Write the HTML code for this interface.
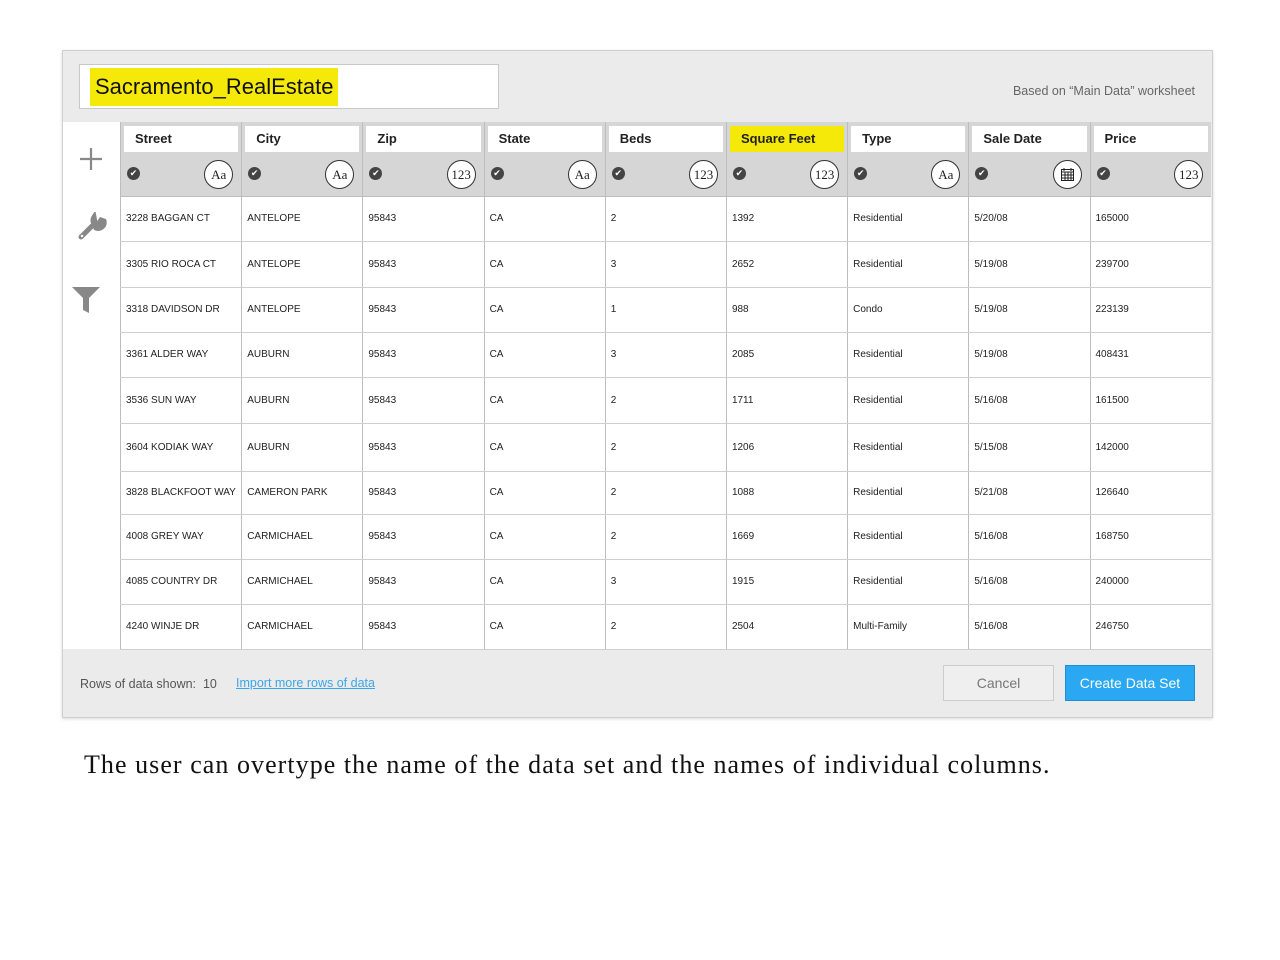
<!DOCTYPE html><html><head><meta charset="utf-8"><style>
body{margin:0;width:1280px;height:960px;background:#fff;font-family:"Liberation Sans",sans-serif;position:relative;overflow:hidden}
.dlg{position:absolute;left:62px;top:50px;width:1149px;height:666px;background:#ebebeb;border:1px solid #cfcfcf;box-shadow:0 1px 3px rgba(0,0,0,.15)}
.a{position:absolute}
.name{left:16px;top:13px;width:418px;height:43px;background:#fff;border:1px solid #c8c8c8}
.name span{position:absolute;left:10px;top:3px;height:38px;padding:0 5px;background:#f5e90a;font-size:22px;line-height:38px;color:#111}
.side{left:0;top:71px;width:58px;height:527px;background:#fff}
table{position:absolute;left:57px;top:71px;border-collapse:collapse;table-layout:fixed;width:1091px}
td{box-sizing:border-box;width:121.2px;border-left:1px solid #bdbdbd;border-bottom:1px solid #cfcfcf;font-size:10px;color:#222;padding:0 0 0 5px;background:#fff;white-space:nowrap;overflow:hidden}
tr.h td{background:#d6d6d6;height:31px;padding:3px 3px 0 3px;border-bottom:none}
tr.h td div{background:#fff;height:26px;line-height:26px;font-weight:bold;font-size:13px;padding-left:11px;color:#222}
tr.t td{background:#d6d6d6;height:43px;position:relative;border-bottom:1px solid #bdbdbd}
.chk{position:absolute;left:6px;top:14px;width:13px;height:13px;border-radius:50%;background:#444;color:#fff;font-size:9px;line-height:13px;text-align:center}
.ic{position:absolute;right:8px;top:7px;width:27px;height:27px;border:1px solid #333;border-radius:50%;background:#fff;font-family:"Liberation Serif",serif;font-size:13px;line-height:27px;text-align:center;color:#222}
</style></head><body>
<div class="dlg">
<div class="a name"><span>Sacramento_RealEstate</span></div>
<div class="a" style="right:17px;top:33px;font-size:12.5px;color:#666">Based on “Main Data” worksheet</div>
<div class="a side">
<svg class="a" style="left:16px;top:25px" width="24" height="24"><path d="M12 1v22M1 12h22" stroke="#888" stroke-width="2.2"/></svg>
<svg class="a" style="left:14px;top:90px" width="30" height="30" viewBox="0 0 30 30"><path d="M4 25 L15 14 M17 5 a6 6 0 0 0 7 9 l-2-3 2-3 3 1 a6 6 0 0 1-8 7z" stroke="#888" stroke-width="5" fill="#888" stroke-linecap="round"/><circle cx="5" cy="24" r="1.2" fill="#fff"/></svg>
<svg class="a" style="left:8px;top:163px" width="30" height="30" viewBox="0 0 30 30"><path d="M1 2h28l-11 11v15l-6-3v-12z" fill="#888"/></svg>
</div>
<table>
<tr class="h"><td><div>Street</div></td><td><div>City</div></td><td><div>Zip</div></td><td><div>State</div></td><td><div>Beds</div></td><td><div style="background:#f5e90a">Square Feet</div></td><td><div>Type</div></td><td><div>Sale Date</div></td><td><div>Price</div></td></tr>
<tr class="t"><td><span class="chk">✔</span><span class="ic">Aa</span></td><td><span class="chk">✔</span><span class="ic">Aa</span></td><td><span class="chk">✔</span><span class="ic">123</span></td><td><span class="chk">✔</span><span class="ic">Aa</span></td><td><span class="chk">✔</span><span class="ic">123</span></td><td><span class="chk">✔</span><span class="ic">123</span></td><td><span class="chk">✔</span><span class="ic">Aa</span></td><td><span class="chk">✔</span><span class="ic"><svg width="13" height="13" style="margin-top:7px"><rect x="0.5" y="1.5" width="12" height="11" fill="none" stroke="#222"/><path d="M1 4h11M4 4v8M7 4v8M10 4v8M1 7h11M1 10h11M3 0v3M10 0v3" stroke="#222"/></svg></span></td><td><span class="chk">✔</span><span class="ic">123</span></td></tr>
<tr style="height:45px"><td>3228 BAGGAN CT</td><td>ANTELOPE</td><td>95843</td><td>CA</td><td>2</td><td>1392</td><td>Residential</td><td>5/20/08</td><td>165000</td></tr>
<tr style="height:46px"><td>3305 RIO ROCA CT</td><td>ANTELOPE</td><td>95843</td><td>CA</td><td>3</td><td>2652</td><td>Residential</td><td>5/19/08</td><td>239700</td></tr>
<tr style="height:45px"><td>3318 DAVIDSON DR</td><td>ANTELOPE</td><td>95843</td><td>CA</td><td>1</td><td>988</td><td>Condo</td><td>5/19/08</td><td>223139</td></tr>
<tr style="height:45px"><td>3361 ALDER WAY</td><td>AUBURN</td><td>95843</td><td>CA</td><td>3</td><td>2085</td><td>Residential</td><td>5/19/08</td><td>408431</td></tr>
<tr style="height:46px"><td>3536 SUN WAY</td><td>AUBURN</td><td>95843</td><td>CA</td><td>2</td><td>1711</td><td>Residential</td><td>5/16/08</td><td>161500</td></tr>
<tr style="height:48px"><td>3604 KODIAK WAY</td><td>AUBURN</td><td>95843</td><td>CA</td><td>2</td><td>1206</td><td>Residential</td><td>5/15/08</td><td>142000</td></tr>
<tr style="height:43px"><td>3828 BLACKFOOT WAY</td><td>CAMERON PARK</td><td>95843</td><td>CA</td><td>2</td><td>1088</td><td>Residential</td><td>5/21/08</td><td>126640</td></tr>
<tr style="height:45px"><td>4008 GREY WAY</td><td>CARMICHAEL</td><td>95843</td><td>CA</td><td>2</td><td>1669</td><td>Residential</td><td>5/16/08</td><td>168750</td></tr>
<tr style="height:45px"><td>4085 COUNTRY DR</td><td>CARMICHAEL</td><td>95843</td><td>CA</td><td>3</td><td>1915</td><td>Residential</td><td>5/16/08</td><td>240000</td></tr>
<tr style="height:45px"><td>4240 WINJE DR</td><td>CARMICHAEL</td><td>95843</td><td>CA</td><td>2</td><td>2504</td><td>Multi-Family</td><td>5/16/08</td><td>246750</td></tr>
</table>
<div class="a" style="left:17px;top:626px;font-size:12.5px;color:#555">Rows of data shown:&nbsp; 10</div>
<div class="a" style="left:173px;top:625px;font-size:12.5px;color:#3aa6e8;text-decoration:underline">Import more rows of data</div>
<div class="a" style="left:880px;top:614px;width:109px;height:34px;border:1px solid #ccc;background:#efefef;color:#777;font-size:14px;line-height:34px;text-align:center">Cancel</div>
<div class="a" style="left:1002px;top:614px;width:128px;height:34px;border:1px solid #1c8fd6;background:#2aa8f2;color:#fff;font-size:14px;line-height:34px;text-align:center">Create Data Set</div>
</div>
<div class="a" style="left:84px;top:750px;font-family:'Liberation Serif',serif;font-size:26px;letter-spacing:1.05px;color:#111">The user can overtype the name of the data set and the names of individual columns.</div>
</body></html>
